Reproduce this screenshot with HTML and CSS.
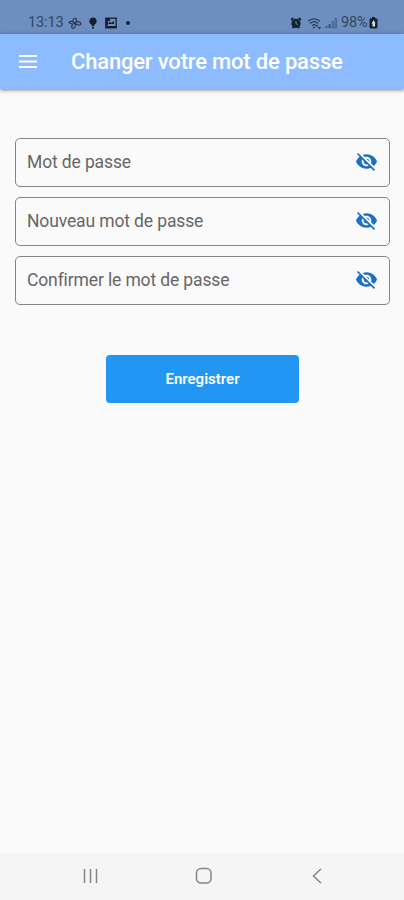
FILE: index.html
```
<!DOCTYPE html>
<html lang="fr">
<head>
<meta charset="utf-8">
<title>Changer votre mot de passe</title>
<link rel="stylesheet" href="styles.css">
</head>
<body>
<svg width="0" height="0" class="defs" aria-hidden="true">
  <symbol id="eye-off" viewBox="0 0 24 24"><path d="M12 7c2.76 0 5 2.24 5 5 0 .65-.13 1.26-.36 1.83l2.92 2.92c1.51-1.26 2.7-2.89 3.43-4.75-1.73-4.39-6-7.5-11-7.5-1.4 0-2.74.25-3.98.7l2.16 2.16C10.74 7.13 11.35 7 12 7zM2 4.27l2.28 2.28.46.46C3.08 8.3 1.78 10.02 1 12c1.73 4.39 6 7.5 11 7.5 1.55 0 3.03-.3 4.38-.84l.42.42L19.73 22 21 20.73 3.27 3 2 4.27zM7.53 9.8l1.55 1.55c-.05.21-.08.43-.08.65 0 1.66 1.34 3 3 3 .22 0 .44-.03.65-.08l1.55 1.55c-.67.33-1.41.53-2.2.53-2.76 0-5-2.24-5-5 0-.79.2-1.53.53-2.2zm4.31-.78l3.15 3.15.02-.16c0-1.66-1.34-3-3-3l-.17.01z"/></symbol>
</svg>
<div class="screen">
  <div class="status">
    <div class="status-left">
      <span class="clock">13:13</span>
      <svg class="fan" width="14" height="14" viewBox="0 0 14 14"><g fill="none" stroke="currentColor" stroke-width="1.2"><path d="M7 7C3.5 6.500 4.500 2.500 7.500 2.300 9.500 3.500 8.500 5.500 7 7zM7 7C10 4.500 13 6 13 8.200 11.500 10 9 9 7 7zM7 7C8.500 10.500 6 13 4 12 3 10 4.500 8 7 7zM1 6.200C3 4.800 5 5.500 7 7 5 8.500 2.500 8.300 1 6.200z"/></g></svg>
      <svg class="pin" width="10" height="14" viewBox="0 0 10 14"><path d="M5 1.500a3.700 3.700 0 0 1 1.600 7L6 10H4L3.400 8.500A3.700 3.700 0 0 1 5 1.500zM4 10.800h2v1.700H4z" fill="currentColor"/></svg>
      <svg class="photo" width="12" height="12" viewBox="0 0 12 12"><rect x=".8" y="1.200" width="10.400" height="9.600" fill="none" stroke="currentColor" stroke-width="1.300"/><path d="M1 1h4v3H3v3l2-2.500 1.500 1.500L9 3.800V7H3v1.500H1zM1 9h10v2H1z" fill="currentColor"/></svg>
      <span class="dot"></span>
    </div>
    <div class="status-right">
      <svg class="alarm" width="12" height="12" viewBox="0 0 12 12"><path d="M1 3l2.400-2M11 3L8.600 1M2.500 11l1-1M9.500 11l-1-1" stroke="currentColor" stroke-width="1.800"/><circle cx="6" cy="6.400" r="4.600" fill="currentColor"/><path d="M6 4v2.600l1.800 1" fill="none" stroke="#6c8fc3"/></svg>
      <svg class="wifi" width="15" height="13" viewBox="0 0 15 13"><g fill="none" stroke="currentColor" stroke-width="1.200"><path d="M1 4.200C4.500 1 9.500 1 13 4.200M3 6.500c2.400-2.200 5.600-2.200 8 0M5 8.700c1.200-1.200 2.800-1.200 4 0"/></g><path d="M7 12L5.500 9.800h3zM10 7.500l1.700 2H8.500zM12.500 12.500l1.700-2.500h-3.400z" fill="currentColor"/></svg>
      <svg class="signal" width="12" height="12" viewBox="0 0 12 12"><path d="M.5 9h2v2h-2zM3.500 7h2v4h-2z" fill="currentColor"/><path d="M7 4.500h1.300v6.500H7zM10 1.500h1.300V11H10z" fill="none" stroke="currentColor" stroke-width=".8"/></svg>
      <span class="percent">98%</span>
      <svg class="battery" width="9" height="12" viewBox="0 0 9 12"><path d="M3 0h3v1.300h1A1.500 1.500 0 0 1 8.500 2.800v7A1.500 1.500 0 0 1 7 11.500H2A1.500 1.500 0 0 1 .5 9.800v-7A1.500 1.500 0 0 1 2 1.300h1z" fill="currentColor"/><path d="M4.800 3L2.500 6.600h1v3h2.500V6.600h.5z" fill="#d2dff0"/></svg>
    </div>
  </div>
  <header class="appbar">
    <svg class="menu" width="18" height="13" viewBox="0 0 18 13"><path d="M0 1h18M0 6.500h18M0 12h18" stroke="#fff" stroke-width="1.900"/></svg>
    <h1>Changer votre mot de passe</h1>
  </header>
  <main>
    <div class="field"><span>Mot de passe</span><svg class="eye"><use href="#eye-off"/></svg></div>
    <div class="field"><span>Nouveau mot de passe</span><svg class="eye"><use href="#eye-off"/></svg></div>
    <div class="field"><span>Confirmer le mot de passe</span><svg class="eye"><use href="#eye-off"/></svg></div>
    <button class="save" type="button">Enregistrer</button>
  </main>
  <nav class="navbar">
    <svg width="16" height="16" viewBox="0 0 16 16"><path d="M1.500 1v14M7.500 1v14M13.500 1v14"/></svg>
    <svg width="18" height="18" viewBox="0 0 18 18"><rect x="1.500" y="1.500" width="14.500" height="14.500" rx="4.500"/></svg>
    <svg width="16" height="16" viewBox="0 0 16 16"><path d="M12 1L4.500 8l7.500 7"/></svg>
  </nav>
</div>
</body>
</html>
```
FILE: styles.css
```
* { box-sizing: border-box; }
body { margin: 0; font-family: Roboto, "Liberation Sans", sans-serif; background: #fafafa; }
.defs { position: absolute; }
.screen { width: 404px; height: 900px; display: flex; flex-direction: column; }
.status {
  height: 34px; padding: 12px 26px 0 28px; background: #6c8fc0; color: #17202d;
  display: flex; justify-content: space-between;
}
.status-left, .status-right { display: flex; align-items: center; height: 22px; }
.clock, .percent { font-size: 14.5px; color: #34455f; line-height: 22px; }
.clock { width: 37px; letter-spacing: -0.1px; }
.percent { width: 28px; font-size: 14.5px; letter-spacing: -0.2px; margin-left: 4px; }
.fan { margin-left: 3px; color: #2b3a50; }
.pin { margin-left: 6px; }
.photo { margin-left: 7px; }
.dot { width: 4px; height: 4px; border-radius: 50%; background: currentColor; margin-left: 9px; }
.wifi { margin-left: 5px; color: #2d3d55; }
.signal { margin-left: 3px; color: #405678; }
.appbar {
  height: 55px; background: #8cbbff; display: flex; align-items: center; padding-left: 19px;
  box-shadow: 0 1px 4px rgba(0, 0, 0, .5);
}
h1 { margin: 0 0 0 34px; font-size: 22px; font-weight: 500; line-height: 26px; letter-spacing: -0.18px; color: #fff; white-space: nowrap; }
main { flex: 1; padding: 49px 14px 0 15px; display: flex; flex-direction: column; gap: 10px; }
.field {
  height: 49px; border: 1px solid #858585; border-radius: 5px; padding: 0 11px 2px;
  display: flex; align-items: center; justify-content: space-between;
  font-size: 17.5px; letter-spacing: -0.13px; color: #666;
}
.eye { width: 23px; height: 23px; fill: #1c70ca; }
.save {
  width: 193px; height: 48px; margin: 40px 0 0 91px; padding: 0; border: 0; border-radius: 4px;
  background: #2196f3; color: #fff; font: 600 15px Roboto, "Liberation Sans", sans-serif;
}
.navbar { height: 47px; background: #f5f5f5; display: flex; align-items: center; padding: 0 0 1px 83px; }
.navbar svg { fill: none; stroke: #858585; stroke-width: 1.500; }
.navbar svg + svg { margin-left: 96px; }
```
